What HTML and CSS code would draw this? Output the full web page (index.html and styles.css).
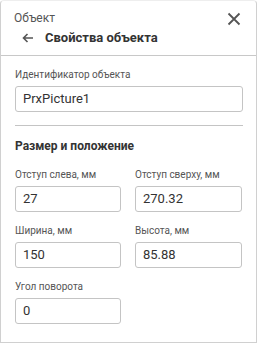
FILE: index.html
```html
<!DOCTYPE html>
<html lang="ru">
<head>
  <meta charset="UTF-8" />
  <title>Свойства объекта</title>
  <link rel="stylesheet" href="styles.css">
</head>
<body>
  <div class="panel">
    <div class="panel-head">
      <div class="head-top">
        <span class="crumb">Объект</span>
        <svg class="close" width="14" height="14" viewBox="0 0 14 14">
          <path d="M1.5 1.5 L12.5 12.5 M12.5 1.5 L1.5 12.5" stroke="#555" stroke-width="1.8" fill="none"/>
        </svg>
      </div>
      <div class="head-title">
        <svg class="back" width="12" height="10" viewBox="0 0 12 10">
          <path d="M11 5 H1.5 M5.5 1 L1.5 5 L5.5 9" stroke="#555" stroke-width="1.6" fill="none"/>
        </svg>
        <span>Свойства объекта</span>
      </div>
    </div>

    <div class="panel-body">
      <div class="field">
        <label>Идентификатор объекта</label>
        <div class="input">PrxPicture1</div>
      </div>

      <hr class="sep">

      <h3 class="section">Размер и положение</h3>

      <div class="grid">
        <div class="field">
          <label>Отступ слева, мм</label>
          <div class="input">27</div>
        </div>
        <div class="field">
          <label>Отступ сверху, мм</label>
          <div class="input">270.32</div>
        </div>
        <div class="field">
          <label>Ширина, мм</label>
          <div class="input">150</div>
        </div>
        <div class="field">
          <label>Высота, мм</label>
          <div class="input">85.88</div>
        </div>
        <div class="field">
          <label>Угол поворота</label>
          <div class="input">0</div>
        </div>
      </div>
    </div>
  </div>
</body>
</html>
```

FILE: styles.css
```css
body {
  margin: 0;
  font-family: Roboto, 'Liberation Sans', sans-serif;
  background: #fff;
}

.panel {
  width: 257px;
  height: 343px;
  box-sizing: border-box;
  border: 1px solid #d0d0d0;
  border-top-color: #eee;
  border-radius: 4px 4px 0 0;
  background: #fff;
}

/* Header */
.panel-head {
  height: 54px;
  border-bottom: 1px solid #c8c8c8;
}

.head-top {
  display: flex;
  justify-content: space-between;
  align-items: center;
  padding: 9px 15px 0 13px;
  height: 15px;
}

.crumb {
  font-size: 12px;
  color: #555;
}

.close {
  margin-top: 3px;
}

.head-title {
  display: flex;
  align-items: center;
  gap: 11px;
  padding: 5px 0 0 21px;
}

.head-title span {
  font-size: 13px;
  font-weight: bold;
  color: #333;
}

/* Body */
.panel-body {
  padding: 13px 13px 0 14px;
}

.field label {
  display: block;
  font-size: 10px;
  color: #555;
  margin-bottom: 5px;
  line-height: 12px;
}

.input {
  height: 26px;
  border: 1px solid #c4c4c4;
  border-radius: 3px;
  box-sizing: border-box;
  padding: 0 7px;
  font-size: 13px;
  color: #333;
  line-height: 24px;
}

.sep {
  border: 0;
  border-top: 1px solid #c4c4c4;
  margin: 13px 0 0;
}

.section {
  margin: 13px 0 16px;
  font-size: 12px;
  font-weight: bold;
  color: #333;
  line-height: 14px;
}

.grid {
  display: grid;
  grid-template-columns: 106px 107px;
  column-gap: 14px;
  row-gap: 13px;
}
```
